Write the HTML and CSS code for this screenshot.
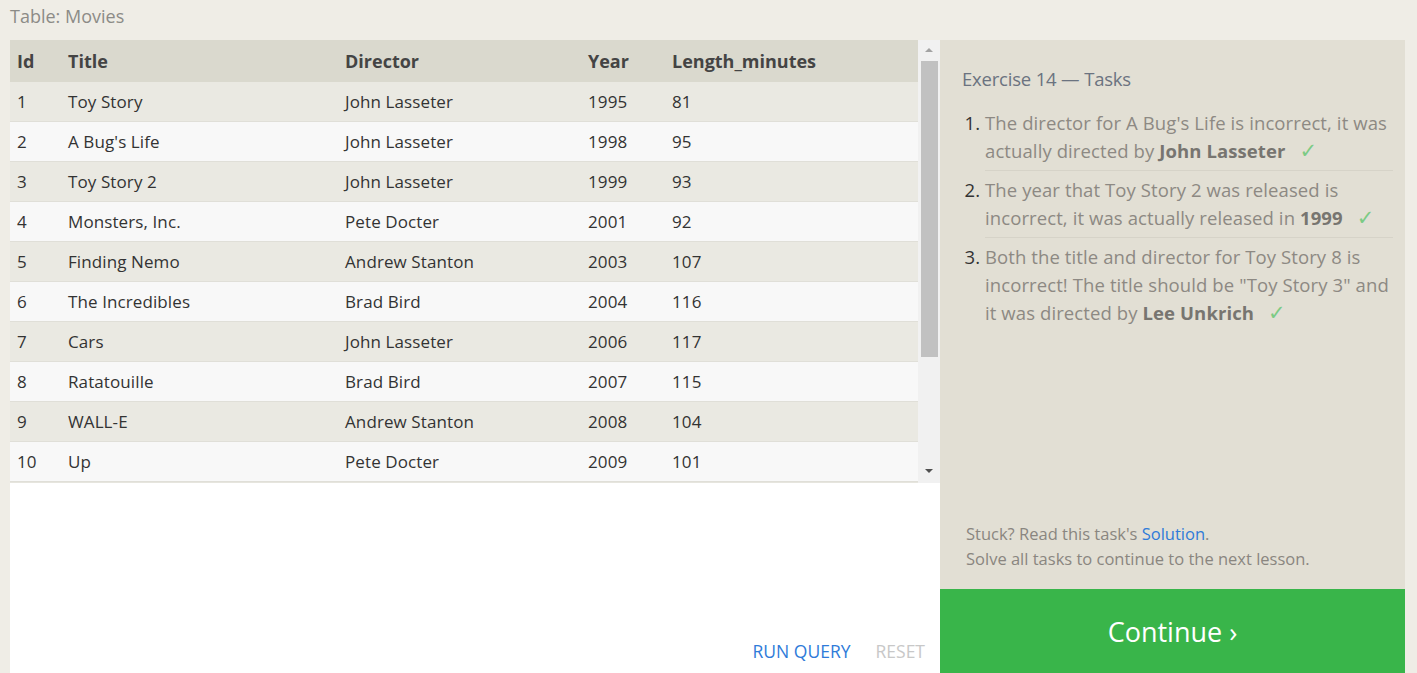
FILE: index.html
```html
<!DOCTYPE html>
<html>
<head>
<meta charset="utf-8">
<link rel="stylesheet" href="styles.css">
</head>
<body>
<div class="page">
  <div class="caption">Table: Movies</div>
  <div class="main">
    <div class="left">
      <div class="tablewrap">
        <div class="tablebox">
          <table class="movies">
            <colgroup>
              <col class="c-id"><col class="c-title"><col class="c-dir"><col class="c-year"><col>
            </colgroup>
            <thead>
              <tr><th>Id</th><th>Title</th><th>Director</th><th>Year</th><th>Length_minutes</th></tr>
            </thead>
            <tbody>
              <tr><td>1</td><td>Toy Story</td><td>John Lasseter</td><td>1995</td><td>81</td></tr>
              <tr><td>2</td><td>A Bug's Life</td><td>John Lasseter</td><td>1998</td><td>95</td></tr>
              <tr><td>3</td><td>Toy Story 2</td><td>John Lasseter</td><td>1999</td><td>93</td></tr>
              <tr><td>4</td><td>Monsters, Inc.</td><td>Pete Docter</td><td>2001</td><td>92</td></tr>
              <tr><td>5</td><td>Finding Nemo</td><td>Andrew Stanton</td><td>2003</td><td>107</td></tr>
              <tr><td>6</td><td>The Incredibles</td><td>Brad Bird</td><td>2004</td><td>116</td></tr>
              <tr><td>7</td><td>Cars</td><td>John Lasseter</td><td>2006</td><td>117</td></tr>
              <tr><td>8</td><td>Ratatouille</td><td>Brad Bird</td><td>2007</td><td>115</td></tr>
              <tr><td>9</td><td>WALL-E</td><td>Andrew Stanton</td><td>2008</td><td>104</td></tr>
              <tr><td>10</td><td>Up</td><td>Pete Docter</td><td>2009</td><td>101</td></tr>
            </tbody>
          </table>
        </div>
        <div class="scrollbar">
          <div class="arrow up"></div>
          <div class="thumb"></div>
          <div class="track"></div>
          <div class="arrow down"></div>
        </div>
      </div>
      <div class="editor">
        <div class="actions">
          <span class="run">RUN QUERY</span>
          <span class="reset">RESET</span>
        </div>
      </div>
    </div>
    <div class="right">
      <div class="tasks">
        <h2 class="tasks-title">Exercise 14 <span class="dash">—</span> Tasks</h2>
        <ol class="task-list">
          <li>The director for A Bug's Life is incorrect, it was actually directed by <b>John Lasseter</b> <span class="check">✓</span></li>
          <li>The year that Toy Story 2 was released is incorrect, it was actually released in <b>1999</b> <span class="check">✓</span></li>
          <li>Both the title and director for Toy Story 8 is incorrect! The title should be "Toy Story 3" and it was directed by <b>Lee Unkrich</b> <span class="check">✓</span></li>
        </ol>
      </div>
      <div class="help">
        <div>Stuck? Read this task's <a class="link">Solution</a>.</div>
        <div>Solve all tasks to continue to the next lesson.</div>
      </div>
      <div class="continue">Continue ›</div>
    </div>
  </div>
</div>
</body>
</html>
```
FILE: styles.css
```css
html, body {
  margin: 0;
  padding: 0;
}
body {
  background: #efede6;
  font-family: "Open Sans", "Noto Sans", sans-serif;
  color: #333;
  width: 1417px;
  height: 673px;
  overflow: hidden;
}
.page {
  padding: 0 12px 0 10px;
}
.caption {
  height: 40px;
  line-height: 33px;
  font-size: 18px;
  color: #8c8b87;
}
.main {
  display: flex;
  height: 633px;
}
.left {
  width: 930px;
  background: #fff;
  display: flex;
  flex-direction: column;
}
.tablewrap {
  display: flex;
  height: 443px;
}
.tablebox {
  width: 908px;
  background: #e6e5de;
}
.movies {
  width: 908px;
  border-collapse: collapse;
  table-layout: fixed;
  font-size: 17px;
  letter-spacing: 0.1px;
}
.c-id { width: 51px; }
.c-title { width: 277px; }
.c-dir { width: 243px; }
.c-year { width: 84px; }
.movies th {
  background: #dad9ce;
  color: #444;
  font-weight: 700;
  text-align: left;
  height: 42px;
  padding: 0 0 0 7px;
  font-size: 18px;
  letter-spacing: 0;
  vertical-align: middle;
}
.movies td {
  height: 39px;
  padding: 0 0 0 7px;
  border-bottom: 1px solid #e0dfd8;
  color: #333;
}
.movies tbody tr:nth-child(odd) td { background: #eae9e2; }
.movies tbody tr:nth-child(even) td { background: #f8f8f8; }
.scrollbar {
  width: 22px;
  background: #f1f1f1;
  display: flex;
  flex-direction: column;
  align-items: center;
}
.arrow {
  width: 0;
  height: 0;
  border-left: 4px solid transparent;
  border-right: 4px solid transparent;
}
.arrow.up {
  border-bottom: 4px solid #a3a3a3;
  margin: 8px 0 9px;
}
.arrow.down {
  border-top: 4px solid #505050;
  margin: 0 0 10px;
}
.thumb {
  width: 17px;
  height: 296px;
  background: #c1c1c1;
}
.track { flex: 1; }
.editor {
  flex: 1;
  display: flex;
  flex-direction: column;
  justify-content: flex-end;
}
.actions {
  display: flex;
  justify-content: flex-end;
  gap: 25px;
  padding: 0 15px 10px 0;
  font-size: 17.5px;
}
.run { color: #2f7bd9; }
.reset { color: #c8c8c8; }
.right {
  width: 465px;
  background: #e2dfd4;
  display: flex;
  flex-direction: column;
}
.tasks {
  flex: 1;
  padding: 26px 12px 0 22px;
}
.tasks-title {
  margin: 0 0 17px;
  font-size: 18.5px;
  font-weight: 400;
  color: #6b7380;
  letter-spacing: -0.2px;
  line-height: 26px;
}
.dash {
  letter-spacing: -4px;
  margin-right: 4px;
}
.task-list {
  margin: 0;
  padding: 0 0 0 23px;
  font-size: 18.5px;
  line-height: 28px;
  color: #8d8983;
  letter-spacing: 0.1px;
}
.task-list li {
  padding: 0 0 5px;
  margin: 0 0 5px;
  border-bottom: 1px solid #d6d3c8;
}
.task-list li:last-child { border-bottom: none; }
.task-list li::marker { color: #333; }
.task-list b { color: #777570; }
.check {
  color: #7ccb85;
  margin-left: 9px;
  font-family: "DejaVu Sans", sans-serif;
  font-size: 21px;
  line-height: 20px;
}
.help {
  padding: 0 20px 18px 26px;
  font-size: 16.5px;
  line-height: 25px;
  color: #8a8680;
}
.link { color: #2f7bd9; }
.continue {
  height: 84px;
  background: #39b54a;
  color: #fff;
  font-size: 27px;
  display: flex;
  align-items: center;
  justify-content: center;
}
```
